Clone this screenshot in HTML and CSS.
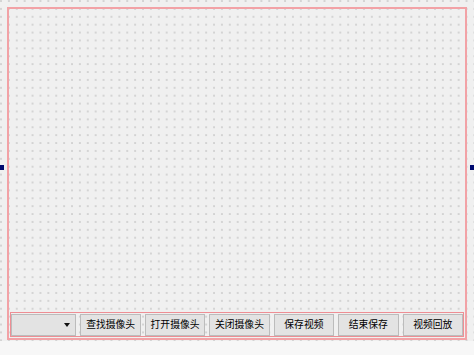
FILE: index.html
```html
<!DOCTYPE html>
<html>
<head>
<meta charset="utf-8">
<link rel="stylesheet" href="styles.css">
</head>
<body>
<div class="form">
  <div class="frame">
    <div class="row">
      <div class="combo"><span class="arrow"></span></div>
      <div class="btn">查找摄像头</div>
      <div class="btn">打开摄像头</div>
      <div class="btn">关闭摄像头</div>
      <div class="btn">保存视频</div>
      <div class="btn">结束保存</div>
      <div class="btn">视频回放</div>
    </div>
  </div>
  <div class="handle handle-left"></div>
  <div class="handle handle-right"></div>
</div>
</body>
</html>
```

FILE: styles.css
```css
html, body {
  margin: 0;
  padding: 0;
  background: #f7f7f7;
  width: 474px;
  height: 355px;
  overflow: hidden;
  font-family: "Noto Sans CJK SC", "Noto Sans", sans-serif;
}

.form {
  position: relative;
  width: 474px;
  height: 341px;
  background-color: #f0f0f0;
  background-image: radial-gradient(circle at 1px 1px, #cbcbcb 0.6px, rgba(240,240,240,0) 1px);
  background-size: 7.9px 7.9px;
  background-position: 0 0;
  padding-top: 7px;
  padding-left: 7px;
  box-sizing: border-box;
}

.frame {
  width: 460px;
  height: 333px;
  box-sizing: border-box;
  border: 2px solid #f2a2a6;
  padding: 1px;
  display: flex;
  flex-direction: column;
  justify-content: flex-end;
}

.row {
  height: 25px;
  box-sizing: border-box;
  border: 1px solid #ee8e94;
  padding-top: 1px;
  display: flex;
  gap: 4px;
}

.btn, .combo {
  flex: 1 1 0;
  min-width: 0;
  box-sizing: border-box;
  background: #e3e3e3;
  border: 1px solid #bcbcbc;
  font-size: 9.8px;
  color: #000;
  display: flex;
  align-items: center;
  justify-content: center;
  line-height: 1;
}

.combo {
  justify-content: flex-end;
  padding-right: 5px;
}

.arrow {
  width: 0;
  height: 0;
  border-left: 3px solid transparent;
  border-right: 3px solid transparent;
  border-top: 4px solid #111;
}

.handle {
  position: absolute;
  top: 165px;
  width: 4px;
  height: 5px;
  background: #000a70;
}

.handle-left { left: 0; }
.handle-right { right: 0; }
```
